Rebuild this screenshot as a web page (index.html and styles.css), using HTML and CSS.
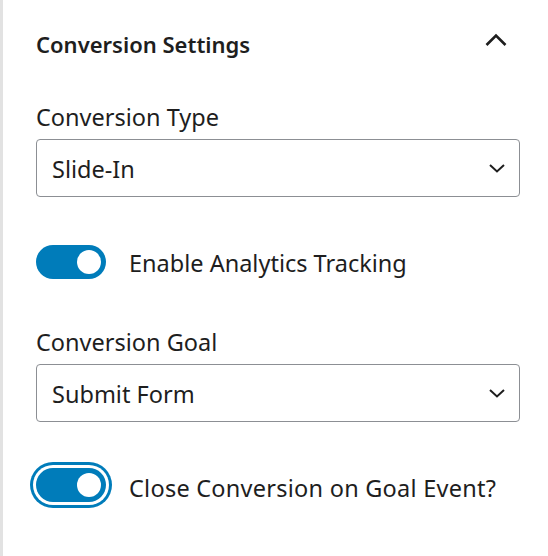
FILE: index.html
```html
<!DOCTYPE html>
<html>
<head>
<meta charset="utf-8">
<link rel="stylesheet" href="styles.css">
</head>
<body>
<div class="panel">
  <div class="panel-header">
    <h2 class="panel-title">Conversion Settings</h2>
    <svg class="chev-up" width="24" height="24" viewBox="0 0 24 24"><path d="M2.5 17 L12 7.5 L21.5 17" fill="none" stroke="#1e1e1e" stroke-width="2.6"/></svg>
  </div>
  <div class="panel-body">
    <div class="field">
      <label class="label">Conversion Type</label>
      <div class="select"><span>Slide-In</span>
        <svg class="chev-down" width="20" height="20" viewBox="0 0 20 20"><path d="M3 7 L10 13.5 L17 7" fill="none" stroke="#1e1e1e" stroke-width="2"/></svg>
      </div>
    </div>
    <div class="toggle-row first">
      <span class="toggle"><span class="knob"></span></span>
      <span class="toggle-label">Enable Analytics Tracking</span>
    </div>
    <div class="field second">
      <label class="label">Conversion Goal</label>
      <div class="select"><span>Submit Form</span>
        <svg class="chev-down" width="20" height="20" viewBox="0 0 20 20"><path d="M3 7 L10 13.5 L17 7" fill="none" stroke="#1e1e1e" stroke-width="2"/></svg>
      </div>
    </div>
    <div class="toggle-row last">
      <span class="toggle focused"><span class="knob"></span></span>
      <span class="toggle-label">Close Conversion on Goal Event?</span>
    </div>
  </div>
</div>
</body>
</html>
```
FILE: styles.css
```css
html, body {
  margin: 0;
  padding: 0;
  background: #fff;
}
body {
  font-family: "Noto Sans", "Open Sans", sans-serif;
  color: #1e1e1e;
}
.panel {
  height: 556px;
  border-left: 3px solid #e2e2e2;
  box-sizing: border-box;
  padding: 0 28px 0 33px;
}
.panel-header {
  display: flex;
  align-items: center;
  justify-content: space-between;
  height: 88px;
}
.panel-title {
  margin: 0;
  font-size: 22px;
  font-weight: 600;
  line-height: 30px;
}
.chev-up {
  margin-right: 12px;
  margin-top: -9px;
}
.field {
  display: flex;
  flex-direction: column;
}
.label {
  font-size: 23.5px;
  line-height: 28px;
  margin-top: 15px;
  margin-bottom: 8px;
}
.select {
  height: 58px;
  box-sizing: border-box;
  border: 1.5px solid #8c8f94;
  border-radius: 4px;
  display: flex;
  align-items: center;
  justify-content: space-between;
  padding: 2px 12px 0 15px;
  font-size: 23.5px;
}
.chev-down {
  margin-top: -2px;
}
.toggle-row {
  display: flex;
  align-items: center;
  gap: 23px;
}
.toggle-row.first {
  margin-top: 48px;
}
.toggle {
  width: 70px;
  height: 34px;
  border-radius: 17px;
  background: #007cba;
  display: flex;
  align-items: center;
  justify-content: flex-end;
  padding-right: 5px;
  box-sizing: border-box;
  flex-shrink: 0;
}
.toggle.focused {
  box-shadow: 0 0 0 3px #fff, 0 0 0 6px #007cba;
}
.knob {
  width: 24px;
  height: 24px;
  border-radius: 50%;
  background: #fff;
}
.toggle-label {
  font-size: 23.5px;
  line-height: 28px;
  padding-top: 2px;
}
.toggle-row.last .toggle-label {
  padding-top: 6px;
  letter-spacing: 0.25px;
}
.field.second .label {
  margin-top: 49px;
}
.toggle-row.last {
  margin-top: 46px;
}
```
